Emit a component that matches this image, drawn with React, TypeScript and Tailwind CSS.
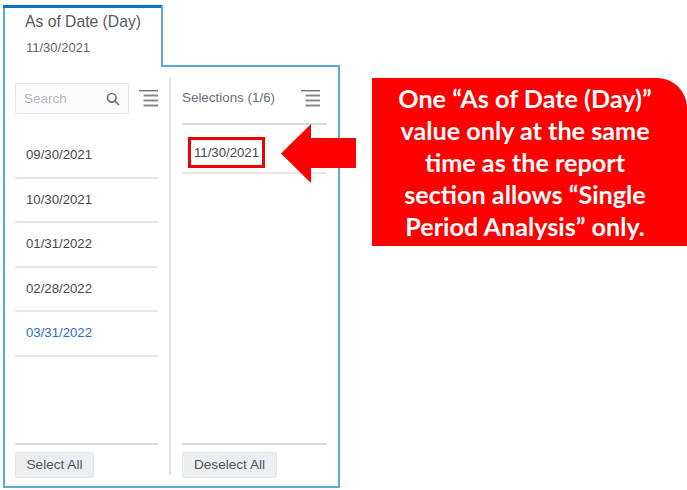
const leftDates = ["09/30/2021", "10/30/2021", "01/31/2022", "02/28/2022", "03/31/2022"];

function MenuIcon() {
  return (
    <svg width="19" height="17" viewBox="0 0 19 17" className="shrink-0">
      <rect x="0" y="0" width="19" height="1.4" fill="#6f7479" />
      <rect x="4.5" y="4.5" width="14.5" height="2" fill="#85898d" />
      <rect x="4.5" y="9.5" width="14.5" height="2" fill="#85898d" />
      <rect x="4.5" y="14.5" width="14.5" height="2" fill="#85898d" />
    </svg>
  );
}

function SearchIcon() {
  return (
    <svg width="14" height="14" viewBox="0 0 14 14" fill="none" stroke="#6b7075" strokeWidth="1.7">
      <circle cx="5.8" cy="5.8" r="4.3" />
      <path d="M9 9l4 4" />
    </svg>
  );
}

function FooterButton({ label, width }: { label: string; width: string }) {
  return (
    <button className={`${width} h-[26px] rounded-[2px] border border-[#e4e8ea] bg-[#eceff1] text-[13.6px] text-[#4f5459]`}>
      {label}
    </button>
  );
}

export default function App() {
  return (
    <div className="relative flex h-[490px] w-[687px] items-start overflow-hidden bg-white pl-[3px] pt-[5px] font-['Liberation_Sans',Arial,sans-serif]">
      <div className="flex w-[337px] flex-col">
        <div className="relative z-10 -mb-[2px] h-[62px] w-[160px] border-x-2 border-[#5aa9dd] bg-white pl-[20px]">
          <div className="-ml-[22px] h-[3px] bg-[#0572ce]" />
          <div className="mt-[4px] text-[15.7px] leading-[20px] text-[#555a5f]">As of Date (Day)</div>
          <div className="ml-[1px] mt-[8px] text-[13px] leading-[16px] text-[#63686d]">11/30/2021</div>
        </div>
        <div className="flex h-[423px] border-2 border-[#5aa9dd] px-[10px]">
          <div className="my-[11px] flex w-[156px] flex-col border-r-2 border-[#dfe1e2] pr-[11px] pt-[5px]">
            <div className="flex items-center justify-between">
              <div className="flex h-[31px] w-[114px] items-center justify-between rounded-[2px] border border-[#dfe4e8] bg-[#fbfcfd] px-[8px] text-[13.5px] text-[#b4b9bd]">
                <span className="pt-[2px]">Search</span>
                <SearchIcon />
              </div>
              <MenuIcon />
            </div>
            <div className="mt-[20px] flex-1">
              {leftDates.map((date, i) => (
                <div
                  key={date}
                  className={`flex h-[44.5px] items-center border-b-2 border-[#e6e7e8] pl-[11px] text-[13.2px] ${i === 4 ? "text-[#2a6fc0]" : "text-[#45494d]"}`}
                >
                  {date}
                </div>
              ))}
            </div>
            <div className="-mb-[3px] border-t-2 border-[#d9dbdc] pt-[7px]">
              <FooterButton label="Select All" width="w-[79px]" />
            </div>
          </div>
          <div className="my-[11px] flex w-[156px] flex-col pl-[11px]">
            <div className="flex h-[45px] items-start justify-between pr-[7px] pt-[12px] text-[13.4px] text-[#6a6f74]">
              <span className="leading-[16px]">Selections (1/6)</span>
              <MenuIcon />
            </div>
            <div className="border-t-2 border-[#d9dbdc]" />
            <div className="flex h-[49px] items-start border-b-2 border-[#e6e7e8] pl-[6px] pt-[12px]">
              <div className="flex h-[31px] w-[77px] items-center justify-center border-[3px] border-[#f00000] text-[13.2px] text-[#45494d]">
                11/30/2021
              </div>
            </div>
            <div className="flex-1" />
            <div className="-mb-[3px] border-t-2 border-[#d9dbdc] pt-[7px]">
              <FooterButton label="Deselect All" width="w-[95px]" />
            </div>
          </div>
        </div>
      </div>

      <svg width="76" height="60" viewBox="0 0 76 60" className="absolute left-[281px] top-[124px] z-20">
        <path d="M0 29.5L30 0V14H75V44H30V59Z" fill="#ff0000" />
      </svg>

      <div className="ml-[32px] mt-[73px] flex h-[168px] w-[315px] flex-col justify-center rounded-tr-[30px] bg-[#ff0000] pr-[9px] text-center font-['Lato',sans-serif] text-[25.2px] font-bold leading-[32px] text-white">
        <div>One “As of Date (Day)”</div>
        <div>value only at the same</div>
        <div>time as the report</div>
        <div>section allows “Single</div>
        <div>Period Analysis” only.</div>
      </div>
    </div>
  );
}
